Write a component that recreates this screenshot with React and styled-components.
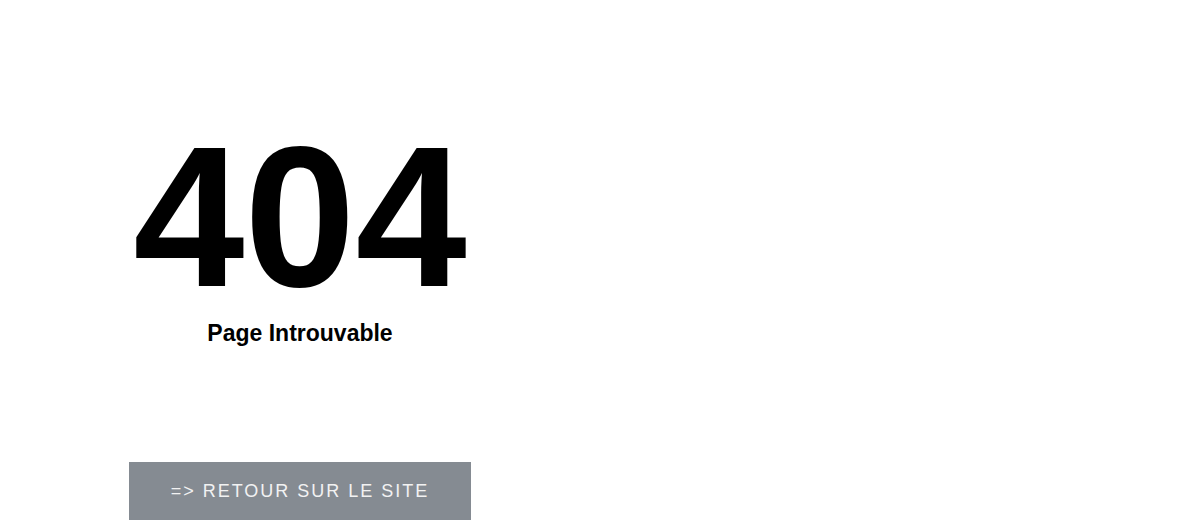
import React from "react";
import styled, { createGlobalStyle } from "styled-components";

const GlobalStyle = createGlobalStyle`
  body {
    margin: 0;
    background: #fff;
    font-family: "Liberation Sans", Arial, sans-serif;
  }
`;

const App = () => {
  return (
    <>
      <GlobalStyle />
      <Page>
        <Column>
          <Code>404</Code>
          <Subtitle>Page Introuvable</Subtitle>
          <BackButton href="#">=&gt; RETOUR SUR LE SITE</BackButton>
        </Column>
      </Page>
    </>
  );
};

export default App;

const Page = styled.main`
  padding: 117px 0 0 129px;
`;

const Column = styled.div`
  width: 342px;
  display: flex;
  flex-direction: column;
  align-items: center;
  text-align: center;
`;

const Code = styled.h1`
  margin: 0;
  font-size: 200px;
  line-height: 200px;
  font-weight: 700;
  color: #000;
`;

const Subtitle = styled.h2`
  margin: 3px 0 0;
  font-size: 23px;
  line-height: 27.6px;
  font-weight: 700;
  color: #000;
`;

const BackButton = styled.a`
  margin-top: 114px;
  align-self: stretch;
  height: 58px;
  line-height: 58px;
  background: #858b92;
  color: #f2f2f2;
  font-size: 18px;
  letter-spacing: 2px;
  text-decoration: none;
  text-align: center;
`;
